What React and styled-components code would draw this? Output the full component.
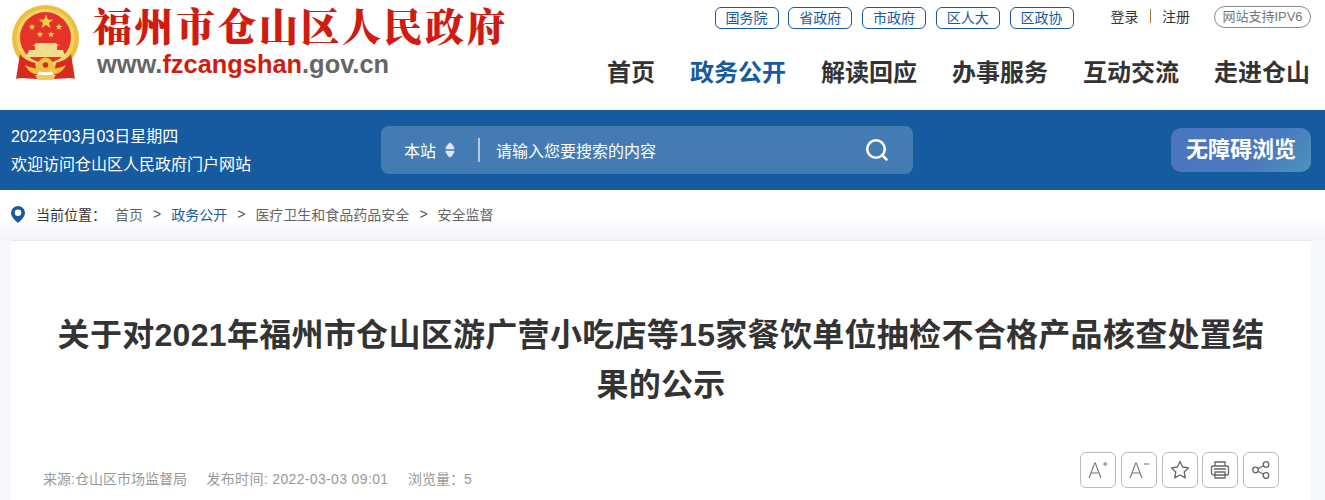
import styled, { createGlobalStyle } from "styled-components";

const cjk = `"Liberation Sans", "Noto Sans CJK SC", sans-serif`;

const GlobalStyle = createGlobalStyle`
  html, body { margin: 0; padding: 0; background: #fff; overflow: hidden; }
  body { font-family: ${cjk}; width: 1325px; height: 500px; }
`;

const Header = styled.header`
  height: 110px;
  display: flex;
  justify-content: space-between;
  padding: 0 14px 0 11px;
`;
const Brand = styled.div`
  display: flex;
  align-items: flex-start;
  padding-top: 5px;
`;
const BrandText = styled.div`
  margin-left: 12px;
  display: flex;
  flex-direction: column;
`;
const SiteName = styled.div`
  font-family: "Noto Serif CJK SC", "Noto Sans CJK SC", serif;
  font-weight: 900;
  font-size: 39px;
  line-height: 44px;
  letter-spacing: 2.5px;
  margin-top: -3px;
  color: #d01c10;
  white-space: nowrap;
`;
const SiteUrl = styled.div`
  font-family: "Liberation Sans", sans-serif;
  font-weight: 700;
  font-size: 25.4px;
  line-height: 28px;
  margin: 4px 0 0 4px;
  color: #666;
  span { color: #d01c10; }
`;
const HeaderRight = styled.div`
  display: flex;
  flex-direction: column;
  align-items: flex-end;
`;
const TopRow = styled.div`
  display: flex;
  align-items: center;
  height: 36px;
`;
const LinkPills = styled.div`
  display: flex;
  gap: 9.75px;
  margin-right: 37px;
`;
const Pill = styled.a`
  width: 62px;
  height: 20px;
  border: 1px solid #165aa0;
  border-radius: 6px;
  color: #165aa0;
  font-size: 14px;
  line-height: 20px;
  text-align: center;
`;
const Auth = styled.div`
  display: flex;
  align-items: center;
  font-size: 14px;
  color: #333;
  margin: 0 24px 4px 0;
`;
const AuthSep = styled.i`
  width: 1.5px;
  height: 14px;
  background: #a9743c;
  margin: 0 11px;
`;
const Ipv6 = styled.div`
  width: 95px;
  height: 20px;
  border: 1px solid #888;
  border-radius: 11px;
  color: #777;
  font-size: 13px;
  line-height: 20px;
  text-align: center;
  margin-bottom: 2px;
`;
const Nav = styled.nav`
  display: flex;
  gap: 35px;
  margin: 19px 1px 0 0;
`;
const NavItem = styled.a`
  font-size: 24px;
  line-height: 36px;
  font-weight: 700;
  color: ${(p) => (p.$active ? "#165aa0" : "#333")};
`;

const BlueBar = styled.div`
  height: 80px;
  background: #165aa0;
  display: flex;
  align-items: center;
  padding: 0 14px 0 11px;
  color: #fff;
`;
const Welcome = styled.div`
  width: 370px;
  padding-top: 2px;
  font-size: 16px;
  line-height: 28px;
`;
const SearchBox = styled.div`
  width: 532px;
  height: 48px;
  background: rgba(255, 255, 255, 0.2);
  border-radius: 8px;
  display: flex;
  align-items: center;
  font-size: 16px;
  box-sizing: border-box;
  padding: 0 24px 0 23px;
`;
const Scope = styled.div`
  display: flex;
  align-items: center;
  gap: 9px;
`;
const SearchSep = styled.i`
  width: 2px;
  height: 24px;
  background: rgba(255, 255, 255, 0.6);
  margin: 0 16px 0 23px;
`;
const Placeholder = styled.div`
  flex: 1;
`;
const AccessBtn = styled.a`
  margin-left: auto;
  width: 140px;
  height: 44px;
  border-radius: 10px;
  background: linear-gradient(135deg, #4a76c0 0%, #4a78bf 60%, #4c93bb 100%);
  font-size: 22px;
  font-weight: 700;
  line-height: 44px;
  text-align: center;
`;

const Crumbs = styled.div`
  height: 50px;
  display: flex;
  align-items: center;
  padding: 0 0 2px 11px;
  box-sizing: border-box;
  font-size: 14px;
  color: #666;
  background: linear-gradient(#fff 60%, #f3f5fa);
`;
const CrumbLabel = styled.span`
  color: #333;
  margin: 0 9px 0 11px;
`;
const CrumbLink = styled.a`
  color: ${(p) => (p.$active ? "#165aa0" : "#666")};
`;
const CrumbSep = styled.span`
  margin: 0 10px;
  color: #555;
`;

const Main = styled.div`
  background: #f6f8fc;
  padding: 0 14px 0 11px;
  height: 260px;
`;
const Card = styled.article`
  background: #fff;
  height: 260px;
  padding: 0 32px;
  box-sizing: border-box;
  border-top: 1px solid #e6e8f0;
`;
const Title = styled.h1`
  margin: 0;
  padding: 69px 8px 0;
  font-size: 32px;
  line-height: 50px;
  font-weight: 700;
  color: #333;
  text-align: center;
  letter-spacing: 0.3px;
`;
const Meta = styled.div`
  margin-top: 42px;
  display: flex;
  justify-content: space-between;
  align-items: flex-start;
`;
const MetaInfo = styled.div`
  display: flex;
  gap: 19.5px;
  margin-top: 17px;
  font-size: 14px;
  line-height: 20px;
  color: #999;
`;
const MetaDate = styled.span`
  letter-spacing: 0.35px;
`;
const Tools = styled.div`
  display: flex;
  gap: 4.75px;
`;
const ToolBtn = styled.button`
  width: 36px;
  height: 36px;
  padding: 0;
  background: #fff;
  border: 1px solid #bbb;
  border-radius: 6px;
  display: flex;
  align-items: center;
  justify-content: center;
  color: #666;
`;

const star = (cx, cy, r) => {
  const pts = [];
  for (let i = 0; i < 10; i++) {
    const rad = i % 2 ? r * 0.42 : r;
    const a = (Math.PI / 5) * i - Math.PI / 2;
    pts.push(`${(cx + rad * Math.cos(a)).toFixed(1)},${(cy + rad * Math.sin(a)).toFixed(1)}`);
  }
  return pts.join(" ");
};

const Emblem = () => (
  <svg width="70" height="76" viewBox="0 0 70 76">
    <circle cx="34.5" cy="33.5" r="33.5" fill="#eebf3f" />
    <circle cx="34.5" cy="33" r="29" fill="#f6d468" />
    <circle cx="34.5" cy="32.5" r="25.5" fill="#e5332a" />
    <polygon points={star(35, 17, 7.5)} fill="#f6cd45" />
    <polygon points={star(21, 22, 3.6)} fill="#f6cd45" />
    <polygon points={star(48, 22, 3.6)} fill="#f6cd45" />
    <polygon points={star(29, 29.5, 3.4)} fill="#f6cd45" />
    <polygon points={star(40, 29.5, 3.4)} fill="#f6cd45" />
    <path d="M25 38h20l3 3H22zM24 41h22v4H24zM18 45h34l1 3 3 4H14l3-4z" fill="#f4dc8a" />
    <path d="M9 49c3 5 9 7 15 9l3 16-19-1-3 1zM60 49c-3 5-9 7-15 9l-3 16 19-1 3 1z" fill="#d92a20" />
    <path d="M14 60c6 3 11 4 15 3l-2 6c-5 1-10-3-13-9zM55 60c-6 3-11 4-15 3l2 6c5 1 10-3 13-9z" fill="#efc043" />
    <circle cx="34.5" cy="60" r="7.5" fill="#efc043" />
    <circle cx="34.5" cy="60" r="2.8" fill="#d92a20" />
    <path d="M24 70h21l-3 5H27z" fill="#f2ca55" />
  </svg>
);

const Pin = () => (
  <svg width="14" height="17" viewBox="0 0 14 17">
    <path fillRule="evenodd" d="M7 0a7 7 0 0 1 7 7C14 11.5 7 17 7 17S0 11.5 0 7a7 7 0 0 1 7-7zm0 3.5a3.3 3.3 0 1 0 0 6.6 3.3 3.3 0 0 0 0-6.6z" fill="#165aa0" />
  </svg>
);

const Updown = () => (
  <svg width="10" height="16" viewBox="0 0 10 16">
    <path d="M5 .5c1 0 4.500 4.500 4.500 6 0 .5-.4.7-1 .7h-7c-.6 0-1-.2-1-.7C.5 5 4 .5 5 .5zM5 15.500c-1 0-4.500-4.500-4.500-6 0-.5.4-.7 1-.7h7c.6 0 1 .2 1 .7 0 1.500-3.500 6-4.500 6z" fill="#dfe7f2" />
  </svg>
);

const SearchIcon = () => (
  <svg width="24" height="24" viewBox="0 0 24 24" fill="none" stroke="#fff" strokeWidth="2.5" strokeLinecap="round">
    <circle cx="11" cy="11" r="8.8" />
    <path d="M17.5 17.5L21.5 21.5" />
  </svg>
);

const FontSize = ({ sign }) => (
  <svg width="22" height="24" viewBox="0 0 22 24" fill="none" stroke="#777" strokeWidth="1.1">
    <path d="M2 20L7.7 5h.6L14 20M3.900 15h8.200" />
    <path d={sign === "+" ? "M16 6h4.500M18.250 3.750v4.500" : "M16 6h5"} />
  </svg>
);

const Star = () => (
  <svg width="20" height="20" viewBox="0 0 20 20" fill="none" stroke="#666" strokeWidth="1.3" strokeLinejoin="round">
    <path d="M10 1.500l2.600 5.500 6 .8-4.400 4.100 1.100 6-5.300-2.900-5.300 2.900 1.100-6L1.400 7.800l6-.8z" />
  </svg>
);

const Printer = () => (
  <svg width="20" height="20" viewBox="0 0 20 20" fill="none" stroke="#666" strokeWidth="1.3">
    <path d="M5 6V2h10v4" />
    <rect x="1.5" y="6" width="17" height="9" rx="2" />
    <path d="M5 12h10v6H5zM4 9h12" />
  </svg>
);

const Share = () => (
  <svg width="20" height="20" viewBox="0 0 20 20" fill="none" stroke="#666" strokeWidth="1.3">
    <circle cx="15" cy="4.5" r="2.8" />
    <circle cx="15" cy="15.5" r="2.8" />
    <circle cx="4.5" cy="10" r="2.8" />
    <path d="M7 8.700l5.500-2.900M7 11.300l5.500 2.900" />
  </svg>
);

const pills = ["国务院", "省政府", "市政府", "区人大", "区政协"];
const navItems = ["首页", "政务公开", "解读回应", "办事服务", "互动交流", "走进仓山"];

export default function App() {
  return (
    <>
      <GlobalStyle />
      <Header>
        <Brand>
          <Emblem />
          <BrandText>
            <SiteName>福州市仓山区人民政府</SiteName>
            <SiteUrl>
              www.<span>fzcangshan</span>.gov.cn
            </SiteUrl>
          </BrandText>
        </Brand>
        <HeaderRight>
          <TopRow>
            <LinkPills>
              {pills.map((p) => (
                <Pill key={p}>{p}</Pill>
              ))}
            </LinkPills>
            <Auth>
              登录<AuthSep />注册
            </Auth>
            <Ipv6>网站支持IPV6</Ipv6>
          </TopRow>
          <Nav>
            {navItems.map((n) => (
              <NavItem key={n} $active={n === "政务公开"}>
                {n}
              </NavItem>
            ))}
          </Nav>
        </HeaderRight>
      </Header>
      <BlueBar>
        <Welcome>
          2022年03月03日星期四
          <br />
          欢迎访问仓山区人民政府门户网站
        </Welcome>
        <SearchBox>
          <Scope>
            本站 <Updown />
          </Scope>
          <SearchSep />
          <Placeholder>请输入您要搜索的内容</Placeholder>
          <SearchIcon />
        </SearchBox>
        <AccessBtn>无障碍浏览</AccessBtn>
      </BlueBar>
      <Crumbs>
        <Pin />
        <CrumbLabel>当前位置：</CrumbLabel>
        <CrumbLink>首页</CrumbLink>
        <CrumbSep>&gt;</CrumbSep>
        <CrumbLink $active>政务公开</CrumbLink>
        <CrumbSep>&gt;</CrumbSep>
        <CrumbLink>医疗卫生和食品药品安全</CrumbLink>
        <CrumbSep>&gt;</CrumbSep>
        <CrumbLink>安全监督</CrumbLink>
      </Crumbs>
      <Main>
        <Card>
          <Title>关于对2021年福州市仓山区游广营小吃店等15家餐饮单位抽检不合格产品核查处置结果的公示</Title>
          <Meta>
            <MetaInfo>
              <span>来源:仓山区市场监督局</span>
              <MetaDate>发布时间: 2022-03-03 09:01</MetaDate>
              <span>浏览量：5</span>
            </MetaInfo>
            <Tools>
              <ToolBtn><FontSize sign="+" /></ToolBtn>
              <ToolBtn><FontSize sign="-" /></ToolBtn>
              <ToolBtn><Star /></ToolBtn>
              <ToolBtn><Printer /></ToolBtn>
              <ToolBtn><Share /></ToolBtn>
            </Tools>
          </Meta>
        </Card>
      </Main>
    </>
  );
}
